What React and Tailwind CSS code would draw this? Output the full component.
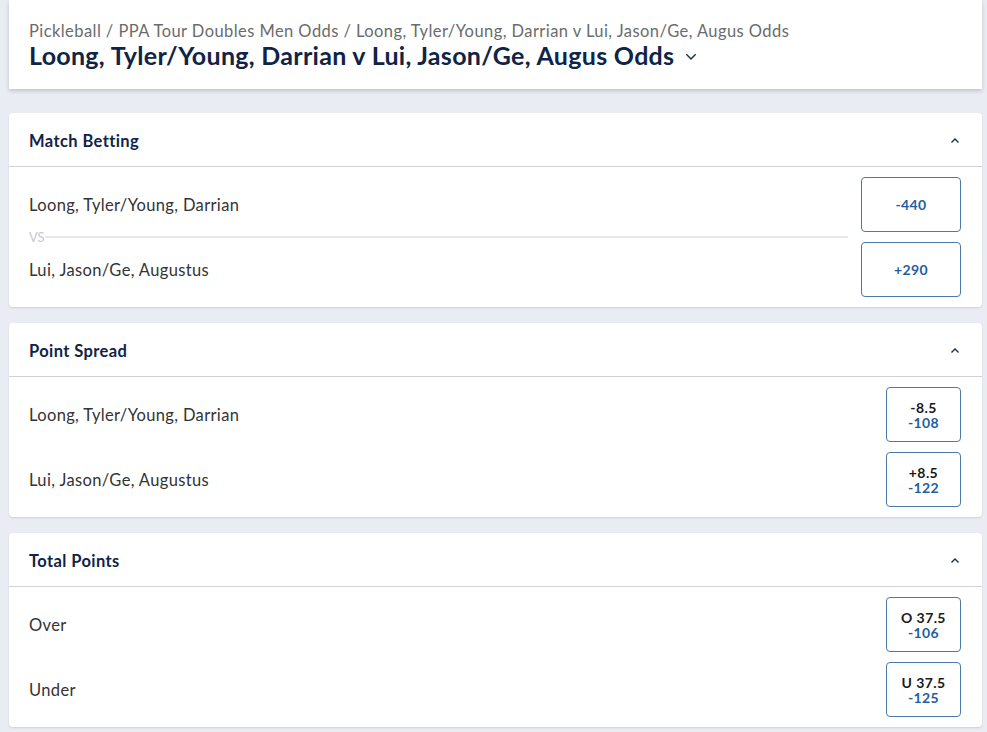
import React from 'react';

const markets = [
  {
    title: 'Match Betting',
    wide: true,
    rows: [
      { name: 'Loong, Tyler/Young, Darrian', odds: '-440' },
      { name: 'Lui, Jason/Ge, Augustus', odds: '+290' },
    ],
  },
  {
    title: 'Point Spread',
    rows: [
      { name: 'Loong, Tyler/Young, Darrian', line: '-8.5', odds: '-108' },
      { name: 'Lui, Jason/Ge, Augustus', line: '+8.5', odds: '-122' },
    ],
  },
  {
    title: 'Total Points',
    rows: [
      { name: 'Over', line: 'O 37.5', odds: '-106' },
      { name: 'Under', line: 'U 37.5', odds: '-125' },
    ],
  },
];

const ChevronUp = () => (
  <svg width="12" height="12" viewBox="0 0 12 12" fill="none" stroke="#1d2d4a" strokeWidth="1.4">
    <path d="M2.5 7.5 L6 4 L9.5 7.5" />
  </svg>
);

const OddsButton = ({ row, wide }) => (
  <button
    className={`${wide ? 'w-[100px]' : 'w-[75px]'} h-[55px] shrink-0 rounded-[4px] border border-[#4a7aa6] bg-white flex flex-col items-center justify-center text-[14px] tracking-[0.4px] font-bold`}
  >
    {row.line && <span className="text-[#1a1a1a] leading-[15px]">{row.line}</span>}
    <span className="text-[#1f5ea3] leading-[15px]">{row.odds}</span>
  </button>
);

const MarketCard = ({ market }) => (
  <div className="bg-white rounded shadow-[0_1px_2px_rgba(0,0,0,0.12)]">
    <div className="h-[54px] flex items-center justify-between pl-[20px] pr-[21px] pt-[3px] border-b border-[#cfd3d9]">
      <span className="text-[16.5px] tracking-[0.4px] font-bold text-[#0f2446]">{market.title}</span>
      <ChevronUp />
    </div>
    <div className="pl-[20px] pr-[21px] pt-[10px] pb-[10px] flex flex-col gap-[10px]">
      {market.rows.map((row, i) => (
        <React.Fragment key={row.name}>
          <div className="flex items-center justify-between h-[55px]">
            <span className="text-[16.5px] tracking-[0.35px] text-[#333] pt-[2px]">{row.name}</span>
            <OddsButton row={row} wide={market.wide} />
          </div>
          {market.wide && i === 0 && (
            <div className="h-0 relative -my-[5px]">
              <div className="absolute left-0 right-[113px] top-0 flex items-center -translate-y-1/2">
                <span className="text-[13px] text-[#c5c9ce] leading-none">VS</span>
                <div className="flex-1 h-px bg-[#cfd3d9]" />
              </div>
            </div>
          )}
        </React.Fragment>
      ))}
    </div>
  </div>
);

const App = () => {
  return (
    <div className="min-h-[732px] bg-[#e9edf3] pl-[9px] pr-[5px] pb-[5px]" style={{ fontFamily: 'Lato, "Open Sans", sans-serif' }}>
      <div className="bg-white h-[89px] shadow-[0_2px_4px_rgba(0,0,0,0.18)] pl-[20px] pt-[20px]">
        <div className="text-[16.5px] tracking-[0.43px] text-[#6b6b6b] leading-[22px]">
          Pickleball / PPA Tour Doubles Men Odds / Loong, Tyler/Young, Darrian v Lui, Jason/Ge, Augus Odds
        </div>
        <div className="flex items-center gap-[10px]">
          <h1 className="text-[25px] tracking-[0.3px] font-bold text-[#0f2446] leading-[26px]">
            Loong, Tyler/Young, Darrian v Lui, Jason/Ge, Augus Odds
          </h1>
          <svg width="14" height="14" viewBox="0 0 12 12" fill="none" stroke="#1d2d4a" strokeWidth="1.2" className="mt-[2px]">
            <path d="M2 4.5 L6 8.5 L10 4.5" />
          </svg>
        </div>
      </div>
      <div className="mt-[24px] flex flex-col gap-[16px]">
        {markets.map((m) => (
          <MarketCard key={m.title} market={m} />
        ))}
      </div>
    </div>
  );
};

export default App;
